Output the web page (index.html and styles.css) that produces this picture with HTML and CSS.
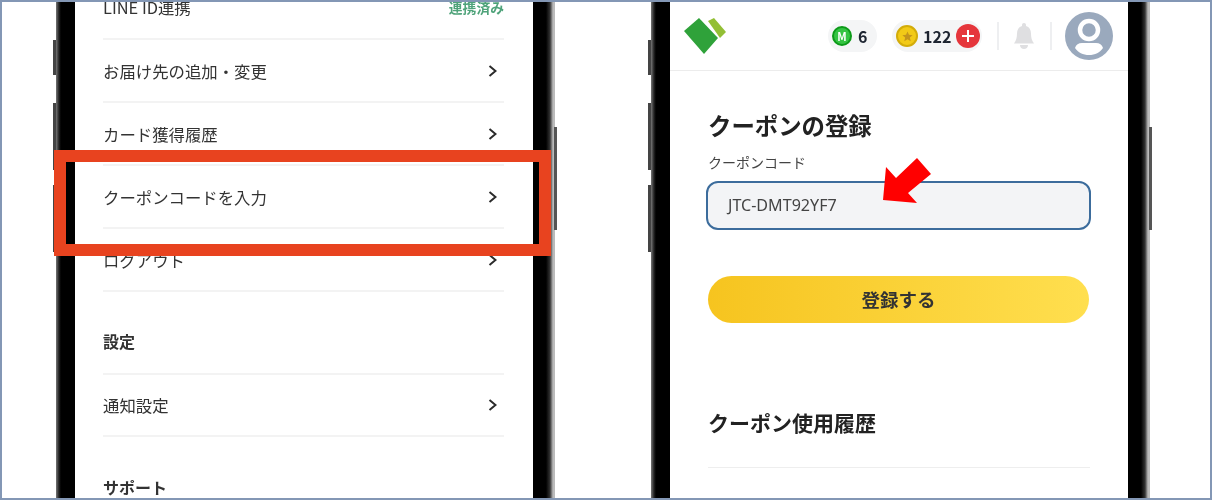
FILE: index.html
```html
<!DOCTYPE html>
<html lang="ja">

<head>
    <meta charset="utf-8" />
    <title>クーポンの登録</title>
    <link rel="stylesheet" href="styles.css">
</head>

<body>
    <div class="frame">
        <div class="phone">
            <span class="key key-a"></span>
            <span class="key key-b"></span>
            <span class="key key-c"></span>
            <span class="key key-side"></span>
            <div class="screen">
                <div class="row row-first">
                    <span>LINE ID連携</span>
                    <span class="linked">連携済み</span>
                </div>
                <div class="row">
                    <span>お届け先の追加・変更</span>
                    <svg class="chev" viewBox="0 0 9 12"><path d="M1.5 1l6 5-6 5" /></svg>
                </div>
                <div class="row">
                    <span>カード獲得履歴</span>
                    <svg class="chev" viewBox="0 0 9 12"><path d="M1.5 1l6 5-6 5" /></svg>
                </div>
                <div class="row">
                    <span>クーポンコードを入力</span>
                    <svg class="chev" viewBox="0 0 9 12"><path d="M1.5 1l6 5-6 5" /></svg>
                </div>
                <div class="row">
                    <span>ログアウト</span>
                    <svg class="chev" viewBox="0 0 9 12"><path d="M1.5 1l6 5-6 5" /></svg>
                </div>
                <div class="group group-settings">設定</div>
                <div class="row row-short">
                    <span>通知設定</span>
                    <svg class="chev" viewBox="0 0 9 12"><path d="M1.5 1l6 5-6 5" /></svg>
                </div>
                <div class="group group-support">サポート</div>
            </div>
            <div class="redbox"></div>
        </div>

        <div class="phone">
            <span class="key key-a"></span>
            <span class="key key-b"></span>
            <span class="key key-c"></span>
            <span class="key key-side"></span>
            <div class="screen">
                <div class="head">
                    <svg class="logo" viewBox="0 0 42 36">
                        <polygon points="0,13 15,0 34,20 20,36" fill="#2fa23a" />
                        <polygon points="24,3 30,0 42,14 36,20" fill="#93bf35" />
                    </svg>
                    <div class="pill pill-m">
                        <span class="medal">M</span>
                        <b>6</b>
                    </div>
                    <div class="pill pill-coin">
                        <span class="coin">
                            <svg viewBox="0 0 12 12"><polygon points="6,0.5 7.6,4.2 11.6,4.6 8.6,7.2 9.5,11.2 6,9.1 2.5,11.2 3.4,7.2 0.4,4.6 4.4,4.2" /></svg>
                        </span>
                        <b>122</b>
                        <span class="plus"></span>
                    </div>
                    <span class="divider"></span>
                    <svg class="bell" viewBox="0 0 20 26">
                        <path d="M10 0c1.2 0 2 .8 2 2v1c3.4 1 5 4 5 7.500 0 4 .8 7 3 10H0c2.200-3 3-6 3-10C3 7 4.600 4 8 3V2c0-1.200.8-2 2-2z" />
                        <path d="M6 22h8c0 2.500-1.800 4-4 4s-4-1.500-4-4z" />
                    </svg>
                    <span class="divider"></span>
                    <svg class="avatar" viewBox="0 0 48 48">
                        <circle cx="24" cy="24" r="24" fill="#9aa9bd" />
                        <circle cx="24" cy="18" r="9" fill="none" stroke="#fff" stroke-width="4.500" />
                        <path d="M17 31h14c3.500 0 6 1.500 7 5-3 4.500-8 7-14 7s-11-2.500-14-7c1-3.500 3.500-5 7-5z" fill="#fff" />
                    </svg>
                </div>
                <div class="content">
                    <h1 class="title">クーポンの登録</h1>
                    <div class="label">クーポンコード</div>
                    <div class="field">JTC-DMT92YF7</div>
                    <div class="submit">登録する</div>
                    <h2 class="history">クーポン使用履歴</h2>
                </div>
                <svg class="arrow" viewBox="0 0 48 45">
                    <polygon points="0,42 3,9 13,20 34,0 48,16 25,35 34,45" />
                </svg>
            </div>
        </div>
    </div>
</body>

</html>
```

FILE: styles.css
```css
* {
    margin: 0;
    padding: 0;
    box-sizing: border-box;
}

body {
    background: #fff;
    font-family: "Noto Sans CJK JP", "Noto Sans", sans-serif;
    color: #333;
}

.frame {
    display: flex;
    gap: 96px;
    width: 1212px;
    height: 500px;
    padding-left: 54px;
    border: 2px solid #8397b5;
    overflow: hidden;
    background: #fff;
}

.phone {
    position: relative;
    flex: none;
    width: 499px;
    height: 496px;
    padding: 0 22px 0 19px;
    background: linear-gradient(90deg, #777 0, #222 3px, #000 5px, #000 490px, #333 494px, #bbb 497px);
}

.key {
    position: absolute;
    width: 3px;
    background: #444;
}

.key-a,
.key-b,
.key-c {
    left: -3px;
}

.key-a {
    top: 38px;
    height: 35px;
}

.key-b {
    top: 101px;
    height: 67px;
}

.key-c {
    top: 183px;
    height: 67px;
}

.key-side {
    right: -2px;
    top: 125px;
    height: 103px;
    background: #555;
}

.screen {
    position: relative;
    width: 458px;
    height: 100%;
    background: #fff;
    overflow: hidden;
}

/* the screenshot is a soft upscale */
.row,
.group,
.head,
.content {
    filter: blur(.35px);
}

/* menu list */
.row {
    display: flex;
    align-items: center;
    justify-content: space-between;
    height: 63px;
    margin: 0 29px 0 28px;
    padding-right: 7px;
    border-bottom: 2px solid #f3f3f3;
    font-size: 16.4px;
    line-height: 24px;
}

.row-first {
    align-items: flex-end;
    height: 38px;
    padding: 0 0 19px;
}

.row-short {
    height: 62px;
}

.linked {
    font-size: 13.800px;
    font-weight: 700;
    line-height: 24px;
    color: #4fa37a;
}

.chev {
    width: 9px;
    height: 12px;
    fill: none;
    stroke: #2b2b2b;
    stroke-width: 2;
}

.group {
    display: flex;
    align-items: flex-end;
    margin: 0 29px 0 28px;
    font-size: 16px;
    font-weight: 700;
    line-height: 24px;
}

.group-settings {
    height: 83px;
    padding-bottom: 20px;
    border-bottom: 2px solid #f3f3f3;
}

.group-support {
    padding-top: 38px;
}

.redbox {
    position: absolute;
    left: -2px;
    top: 148px;
    width: 497px;
    height: 106px;
    border: 12px solid #e8431f;
}

/* coupon screen */
.head {
    display: flex;
    align-items: center;
    height: 69px;
    padding: 0 15px 0 14px;
    border-bottom: 1px solid #ececec;
}

.logo {
    width: 42px;
    height: 36px;
    margin-right: auto;
}

.pill {
    display: flex;
    align-items: center;
    height: 32px;
    margin-right: 15px;
    border-radius: 16px;
    background: #f4f5f6;
    font-size: 16px;
    color: #1d2430;
}

.pill-m {
    width: 49px;
    padding-left: 4px;
    gap: 6px;
}

.pill-coin {
    width: 90px;
    padding-left: 4px;
    gap: 5px;
}

.medal {
    width: 20px;
    height: 20px;
    border-radius: 50%;
    border: 2px solid #0c9a18;
    background: #35c443;
    color: #fff;
    font-size: 11px;
    font-weight: 700;
    line-height: 16px;
    text-align: center;
}

.coin {
    display: flex;
    align-items: center;
    justify-content: center;
    width: 22px;
    height: 22px;
    border-radius: 50%;
    border: 2px solid #d3ac0a;
    background: #f2ca17;
}

.coin svg {
    width: 11px;
    height: 11px;
    fill: #c4951c;
}

.plus {
    position: relative;
    width: 24px;
    height: 24px;
    border-radius: 50%;
    background: #e5363c;
}

.plus::before,
.plus::after {
    content: "";
    position: absolute;
    left: 6px;
    top: 11px;
    width: 12px;
    height: 2px;
    background: #fff;
}

.plus::after {
    transform: rotate(90deg);
}

.divider {
    width: 2px;
    height: 28px;
    background: #eeeff1;
}

.bell {
    width: 20px;
    height: 26px;
    margin: 0 16px 0 15px;
    fill: #dfdfe1;
}

.avatar {
    width: 48px;
    height: 48px;
    margin-left: 13px;
}

.content {
    padding: 38px 38px 0;
}

.title {
    font-size: 23.400px;
    font-weight: 700;
    line-height: 32px;
    color: #222;
}

.label {
    margin-top: 11px;
    font-size: 14px;
    line-height: 20px;
    color: #444;
}

.field {
    height: 49px;
    margin: 9px -1px 0 -2px;
    padding-left: 20px;
    border: 2px solid #3c6c9c;
    border-radius: 12px;
    background: #f3f4f6;
    font-family: "Noto Sans", sans-serif;
    font-size: 16.100px;
    line-height: 45px;
    color: #444;
}

.submit {
    height: 47px;
    margin: 46px 1px 0 0;
    border-radius: 24px;
    background: linear-gradient(90deg, #f6c41f, #ffdf4f);
    font-size: 18.500px;
    font-weight: 700;
    line-height: 47px;
    text-align: center;
    color: #333;
}

.history {
    margin-top: 83px;
    padding-bottom: 29px;
    border-bottom: 1px solid #eee;
    font-size: 21px;
    font-weight: 700;
    line-height: 32px;
    color: #222;
}

.arrow {
    position: absolute;
    left: 213px;
    top: 156px;
    width: 48px;
    height: 45px;
    fill: #f00;
}
```
